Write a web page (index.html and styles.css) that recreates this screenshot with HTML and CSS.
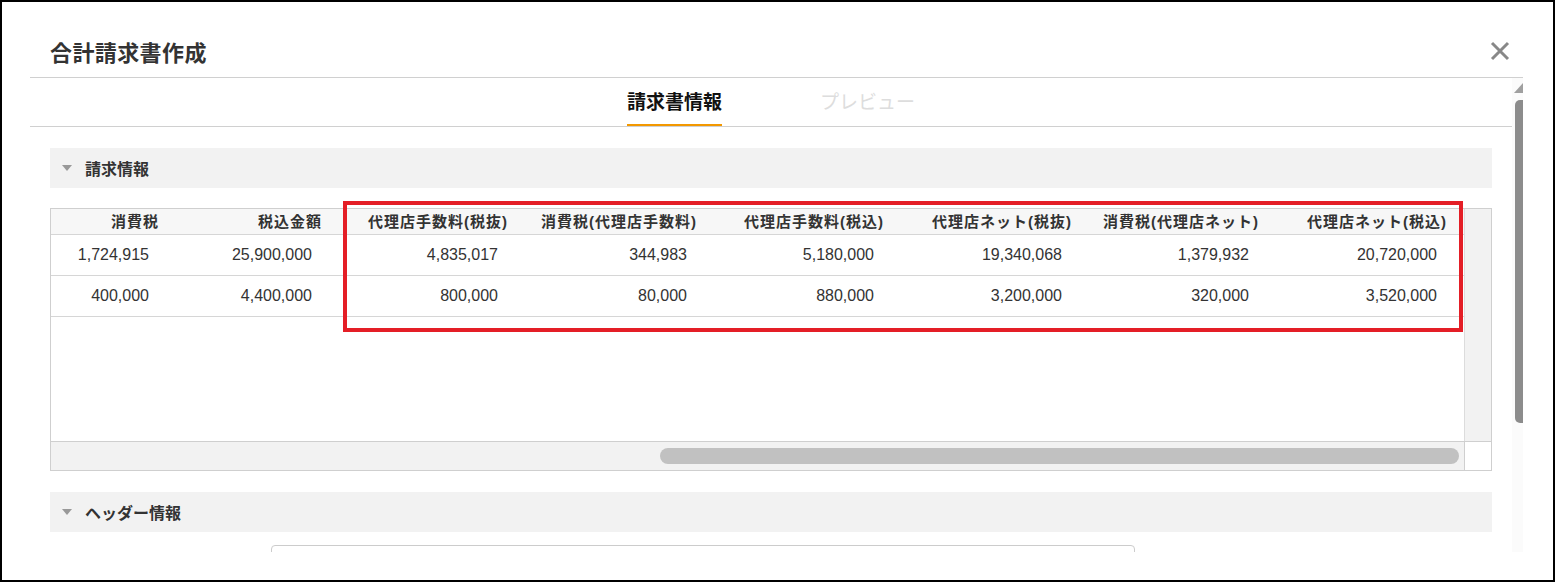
FILE: index.html
```html
<!DOCTYPE html>
<html lang="ja">
<head>
<meta charset="utf-8">
<title>合計請求書作成</title>
<link rel="stylesheet" href="styles.css">
</head>
<body>
<div class="frame">
  <div class="modal">
    <div class="modal-head">
      <h1 class="title">合計請求書作成</h1>
      <button class="close" type="button" aria-label="閉じる">
        <svg width="20" height="20" viewBox="0 0 20 20"><path d="M2 2 L18 18 M18 2 L2 18" stroke="#888" stroke-width="3" stroke-linecap="butt" fill="none"/></svg>
      </button>
    </div>
    <div class="modal-body">
      <div class="body-main">
        <div class="tabs">
          <div class="tab active">請求書情報</div>
          <div class="tab">プレビュー</div>
        </div>
        <div class="content">
          <section class="sec">
            <div class="sec-head"><span class="caret"></span><span>請求情報</span></div>
            <div class="grid-box">
              <div class="grid-main">
                <div class="grid">
                  <div class="row head">
                    <div class="cell">消費税</div>
                    <div class="cell">税込金額</div>
                    <div class="cell">代理店手数料(税抜)</div>
                    <div class="cell">消費税(代理店手数料)</div>
                    <div class="cell">代理店手数料(税込)</div>
                    <div class="cell">代理店ネット(税抜)</div>
                    <div class="cell">消費税(代理店ネット)</div>
                    <div class="cell">代理店ネット(税込)</div>
                    <div class="fill"></div>
                  </div>
                  <div class="row data">
                    <div class="cell">1,724,915</div>
                    <div class="cell">25,900,000</div>
                    <div class="cell">4,835,017</div>
                    <div class="cell">344,983</div>
                    <div class="cell">5,180,000</div>
                    <div class="cell">19,340,068</div>
                    <div class="cell">1,379,932</div>
                    <div class="cell">20,720,000</div>
                    <div class="fill"></div>
                  </div>
                  <div class="row data">
                    <div class="cell">400,000</div>
                    <div class="cell">4,400,000</div>
                    <div class="cell">800,000</div>
                    <div class="cell">80,000</div>
                    <div class="cell">880,000</div>
                    <div class="cell">3,200,000</div>
                    <div class="cell">320,000</div>
                    <div class="cell">3,520,000</div>
                    <div class="fill"></div>
                  </div>
                </div>
                <div class="vtrack"></div>
              </div>
              <div class="hbar">
                <div class="htrack"><div class="hthumb"></div></div>
                <div class="corner"></div>
              </div>
              <div class="highlight"></div>
            </div>
          </section>
          <section class="sec">
            <div class="sec-head"><span class="caret"></span><span>ヘッダー情報</span></div>
            <div class="field"><div class="input"></div></div>
          </section>
        </div>
      </div>
      <div class="vscroll">
        <div class="vs-inner">
          <span class="vs-arrow"></span>
          <div class="vs-thumb"></div>
        </div>
      </div>
    </div>
  </div>
</div>
</body>
</html>
```

FILE: styles.css
```css
* { box-sizing: border-box; }
html, body { margin: 0; padding: 0; background: #fff; }
body {
  font-family: "Liberation Sans", "Noto Sans CJK JP", sans-serif;
  color: #333;
}
.frame {
  width: 1555px;
  height: 582px;
  border: 2px solid #000;
  padding: 22px 0 0 28px;
  background: #fff;
  overflow: hidden;
}
.modal {
  width: 1493px;
  height: 528px;
  display: flex;
  flex-direction: column;
}
.modal-head {
  flex: none;
  height: 54px;
  border-bottom: 1px solid #d0d0d0;
  display: flex;
  align-items: center;
  justify-content: space-between;
  padding: 0 13px 0 20px;
}
.title {
  margin: 0;
  font: bold 22px/1 "Noto Sans CJK JP", sans-serif;
  letter-spacing: 0.4px;
  color: #333;
}
.close {
  display: block;
  width: 20px;
  height: 20px;
  padding: 0;
  border: 0;
  background: none;
}
.close svg { display: block; }
.modal-body {
  flex: 1;
  min-height: 0;
  display: flex;
  overflow: hidden;
}
.body-main {
  flex: none;
  width: 1482px;
  overflow: hidden;
}
.tabs {
  height: 49px;
  border-bottom: 1px solid #d0d0d0;
  display: flex;
  justify-content: center;
  gap: 98px;
}
.tab {
  height: 48px;
  padding: 0;
  font: 19px/46px "Noto Sans CJK JP", sans-serif;
  color: #ddd;
}
.tab.active {
  font-weight: bold;
  color: #111;
  border-bottom: 2px solid #f39800;
}
.content {
  padding: 21px 20px 0;
}
.sec-head {
  height: 40px;
  background: #f2f2f2;
  display: flex;
  align-items: center;
  gap: 13px;
  padding-left: 12px;
  font: bold 16px/1 "Noto Sans CJK JP", sans-serif;
  color: #333;
}
.caret {
  width: 0;
  height: 0;
  border-left: 5px solid transparent;
  border-right: 5px solid transparent;
  border-top: 6px solid #999;
}
.grid-box {
  position: relative;
  margin: 20px 0 21px;
  height: 263px;
  border: 1px solid #cfcfcf;
  display: flex;
  flex-direction: column;
}
.grid-main {
  height: 232px;
  display: flex;
}
.grid {
  flex: 1;
  min-width: 0;
}
.vtrack {
  flex: none;
  width: 27px;
  border-left: 1px solid #dcdcdc;
  background: #f2f2f2;
}
.row {
  display: grid;
  grid-template-columns: 117px 163px 186px 189px 187px 188px 187px 188px 1fr;
  border-bottom: 1px solid #d6d6d6;
}
.fill { min-width: 0; }
.row.head {
  height: 26px;
  background: #f7f7f7;
}
.row.head .cell {
  font: bold 15px/25px "Liberation Sans", "Noto Sans CJK JP", sans-serif;
  letter-spacing: 1px;
  text-align: right;
  padding-right: 9px;
  white-space: nowrap;
  color: #333;
}
.row.data { height: 41px; }
.row.data .cell {
  font: 16px/40px "Liberation Sans", sans-serif;
  text-align: right;
  padding-right: 19px;
  white-space: nowrap;
  color: #333;
}
.hbar {
  height: 29px;
  border-top: 1px solid #cfcfcf;
  background: #f2f2f2;
  display: flex;
}
.htrack {
  flex: 1;
  min-width: 0;
  display: flex;
  align-items: center;
  padding-left: 609px;
  padding-right: 5px;
}
.hthumb {
  flex: 1;
  height: 16px;
  border-radius: 8px;
  background: #c1c1c1;
}
.corner {
  flex: none;
  width: 27px;
  border-left: 1px solid #cfcfcf;
  background: #fff;
}
.highlight {
  position: absolute;
  left: 292px;
  top: -8px;
  width: 1120px;
  height: 131px;
  border: 4px solid #e41e26;
  pointer-events: none;
}
.field {
  padding-left: 221px;
  margin-top: 13px;
}
.input {
  width: 864px;
  height: 34px;
  border: 1px solid #ccc;
  border-radius: 4px;
}
.vscroll {
  flex: none;
  width: 11px;
  overflow: hidden;
  background: #fbfbfb;
}
.vs-inner {
  width: 24px;
  height: 100%;
  padding-top: 5px;
}
.vs-arrow {
  display: block;
  width: 0;
  height: 0;
  margin-left: 2px;
  border-left: 9px solid transparent;
  border-right: 9px solid transparent;
  border-bottom: 10px solid #a0a0a0;
}
.vs-thumb {
  width: 13px;
  height: 323px;
  margin: 7px 0 0 3px;
  border-radius: 5px;
  background: #8c8c8c;
}
```
